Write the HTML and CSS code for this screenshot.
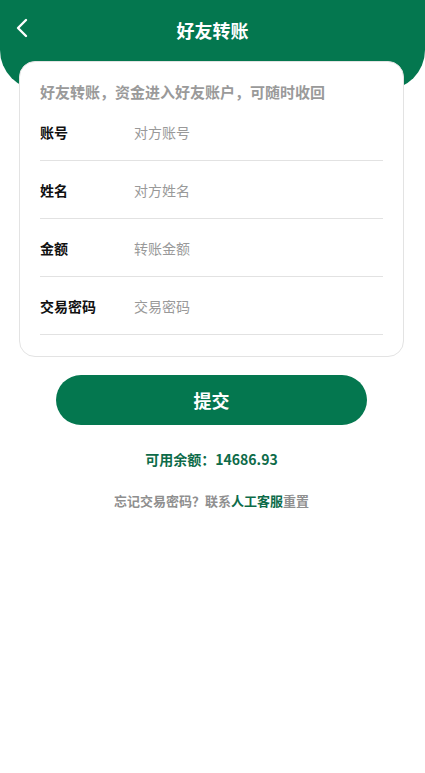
FILE: index.html
```html
<!DOCTYPE html>
<html lang="zh-CN">
<head>
<meta charset="utf-8">
<meta name="viewport" content="width=device-width, initial-scale=1">
<title>好友转账</title>
<link rel="stylesheet" href="styles.css">
</head>
<body>
<header class="topbar">
  <a class="back" href="#" aria-label="返回">
    <svg width="14" height="20" viewBox="0 0 14 20"><path d="M11 2 L3 10 L11 18" fill="none" stroke="#fff" stroke-width="2.4" stroke-linecap="round" stroke-linejoin="round"/></svg>
  </a>
  <h1 class="title">好友转账</h1>
</header>
<main class="content">
  <section class="card">
    <p class="intro">好友转账，资金进入好友账户，可随时收回</p>
    <div class="row"><span class="label">账号</span><input class="field" placeholder="对方账号"></div>
    <div class="row"><span class="label">姓名</span><input class="field" placeholder="对方姓名"></div>
    <div class="row"><span class="label">金额</span><input class="field" placeholder="转账金额"></div>
    <div class="row"><span class="label">交易密码</span><input class="field" type="password" placeholder="交易密码"></div>
  </section>
  <button class="submit">提交</button>
  <p class="balance">可用余额：14686.93</p>
  <p class="forgot">忘记交易密码？联系<a class="service" href="#">人工客服</a>重置</p>
</main>
</body>
</html>
```
FILE: styles.css
```css
* { box-sizing: border-box; }
html, body { margin: 0; padding: 0; background: #fff; }
body {
  font-family: "Noto Sans CJK SC", "Noto Sans", sans-serif;
  color: #111;
}
.topbar {
  height: 90px;
  background: #04774f;
  border-radius: 0 0 40px 40px;
  display: flex;
  align-items: flex-start;
  justify-content: center;
  padding-top: 17px;
  position: relative;
}
.back {
  position: absolute;
  left: 15px;
  top: 18px;
  display: block;
  width: 14px;
  height: 20px;
}
.back svg { display: block; }
.title {
  margin: 0;
  color: #fff;
  font-size: 18px;
  font-weight: 700;
  line-height: 26px;
}
.content {
  margin-top: -29px;
  padding: 0 21px 0 19px;
  display: flex;
  flex-direction: column;
  align-items: center;
  position: relative;
  z-index: 1;
}
.card {
  width: 385px;
  background: #fff;
  border: 1px solid #e3e3e3;
  border-radius: 16px;
  padding: 19px 20px 21px 20px;
}
.intro {
  margin: 0;
  font-size: 15px;
  font-weight: 700;
  line-height: 22px;
  color: #9a9a9a;
}
.row {
  height: 58px;
  display: flex;
  align-items: center;
  border-bottom: 1px solid #e2e2e2;
}
.label {
  width: 94px;
  font-size: 14px;
  font-weight: 700;
  color: #111;
}
.field {
  flex: 1;
  border: 0;
  outline: 0;
  padding: 0;
  font-family: inherit;
  font-size: 14px;
  color: #333;
  background: transparent;
}
.field::placeholder { color: #999; }
.submit {
  margin-top: 18px;
  width: 311px;
  height: 50px;
  border: 0;
  border-radius: 25px;
  background: #04774f;
  color: #fff;
  font-family: inherit;
  font-size: 18px;
  font-weight: 700;
}
.balance {
  margin: 22px 0 0 0;
  font-size: 14px;
  font-weight: 700;
  color: #0d6b49;
  line-height: 24px;
}
.forgot {
  margin: 18px 0 0 0;
  font-size: 13px;
  font-weight: 700;
  color: #8f8f8f;
  line-height: 24px;
}
.service {
  color: #0d6b49;
  text-decoration: none;
}
```
